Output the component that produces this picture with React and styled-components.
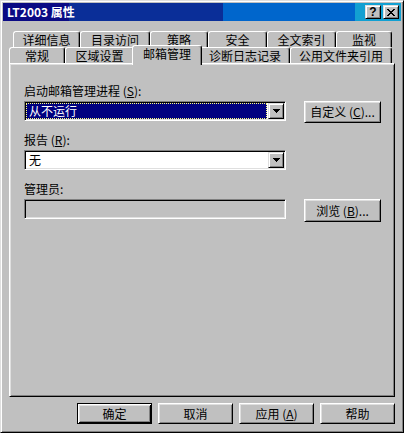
import React from 'react';
import styled, { createGlobalStyle } from 'styled-components';

// classic 3d colours
const FACE = '#c0c0c0';
const LIGHT = '#dfdfdf';
const SHADOW = '#808080';

const GlobalStyle = createGlobalStyle`
  html, body {
    margin: 0;
    padding: 0;
    background: ${FACE};
  }
  body {
    font-family: "Noto Sans CJK SC", "Liberation Sans", sans-serif;
    font-size: 12px;
    color: #000;
  }
  * {
    box-sizing: border-box;
  }
`;

const Window = styled.div`
  width: 404px;
  height: 433px;
  background: ${FACE};
  border: 1px solid;
  border-color: ${LIGHT} #000 #000 ${LIGHT};
  box-shadow: inset 1px 1px #fff, inset -1px -1px ${SHADOW};
  padding: 2px;
  display: flex;
  flex-direction: column;
`;

const TitleBar = styled.div`
  height: 18px;
  display: flex;
  align-items: center;
  padding: 0 2px;
  color: #fff;
  background: linear-gradient(
    to right,
    #0a0a84 0, #0a0a84 66px,
    #0a2e98 66px, #0a2e98 220px,
    #0066cc 220px, #0066cc 352px,
    #12a0d2 352px, #12a0d2 100%
  );
`;

const Caption = styled.div`
  flex: 1;
  padding-left: 2px;
  line-height: 18px;
  font-size: 12px;
  font-weight: 700;
  white-space: nowrap;
`;

const CaptionButtons = styled.div`
  display: flex;
  gap: 2px;
`;

const CaptionButton = styled.div`
  width: 16px;
  height: 14px;
  display: flex;
  align-items: center;
  justify-content: center;
  background: ${FACE};
  border: 1px solid;
  border-color: ${LIGHT} #000 #000 ${LIGHT};
  box-shadow: inset 1px 1px #fff, inset -1px -1px ${SHADOW};
  color: #000;
  font-family: "Liberation Sans", sans-serif;
  font-weight: 700;
  font-size: 12px;
  line-height: 12px;
`;

const Body = styled.div`
  flex: 1;
  padding: 10px 6px 0 6px;
  display: flex;
  flex-direction: column;
`;

const TabRow = styled.div`
  display: flex;
  height: 16px;
  padding-left: ${p => p.$indent || 0}px;
  align-items: flex-start;
`;

const Tab = styled.div`
  position: relative;
  width: ${p => p.$w}px;
  height: ${p => (p.$active ? 20 : 16)}px;
  margin: ${p => (p.$active ? '-2px -2px 0' : '0')};
  z-index: ${p => (p.$active ? 2 : 1)};
  background: ${FACE};
  border: 1px solid;
  border-bottom: none;
  border-color: #fff #000 transparent #fff;
  border-radius: 3px 3px 0 0;
  box-shadow: inset -1px 0 ${SHADOW};
  padding-top: 1px;
  text-align: center;
  line-height: 13px;
  white-space: nowrap;
`;

const Panel = styled.div`
  height: 334px;
  border: 1px solid;
  border-color: #fff #000 #000 #fff;
  box-shadow: inset 1px 1px ${LIGHT}, inset -1px -1px ${SHADOW};
  padding: 20px 0 0 14px;
`;

const Label = styled.div`
  line-height: 14px;
  height: 14px;
  margin-bottom: 3px;
  white-space: nowrap;
`;

const Row = styled.div`
  display: flex;
  align-items: flex-start;
  gap: 18px;
  height: 20px;
  margin-bottom: 12px;
`;

const Sunken = styled.div`
  width: 262px;
  height: 20px;
  display: flex;
  padding: 1px;
  background: ${p => (p.$disabled ? FACE : '#fff')};
  border: 1px solid;
  border-color: ${SHADOW} #fff #fff ${SHADOW};
  box-shadow: inset 1px 1px #000, inset -1px -1px ${LIGHT};
`;

const ComboValue = styled.div`
  flex: 1;
  margin-right: 1px;
  padding-left: 2px;
  line-height: 14px;
  color: ${p => (p.$selected ? '#fff' : '#000')};
  background: ${p => (p.$selected ? '#000080' : 'transparent')};
  border: 1px ${p => (p.$selected ? 'dotted #ffff80' : 'solid transparent')};
  white-space: nowrap;
`;

const DropButton = styled.div`
  width: 16px;
  height: 16px;
  display: flex;
  align-items: center;
  justify-content: center;
  background: ${FACE};
  border: 1px solid;
  border-color: ${LIGHT} #000 #000 ${LIGHT};
  box-shadow: inset 1px 1px #fff, inset -1px -1px ${SHADOW};
`;

const Button = styled.div`
  width: ${p => p.$w || 75}px;
  height: ${p => p.$h || 21}px;
  display: flex;
  align-items: center;
  justify-content: center;
  background: ${FACE};
  border: 1px solid;
  border-color: ${p => (p.$default ? '#000' : `#fff #000 #000 #fff`)};
  box-shadow: ${p =>
    p.$default
      ? `inset 1px 1px #fff, inset -1px -1px #000, inset 2px 2px ${LIGHT}, inset -2px -2px ${SHADOW}`
      : `inset 1px 1px ${LIGHT}, inset -1px -1px ${SHADOW}`};
  line-height: 14px;
  white-space: nowrap;
  flex-shrink: 0;
`;

const Footer = styled.div`
  display: flex;
  justify-content: flex-end;
  gap: 6px;
  margin-top: 6px;
`;

const Arrow = () => (
  <svg width="7" height="4" viewBox="0 0 7 4" shapeRendering="crispEdges">
    <path d="M0 0h7v1H0zM1 1h5v1H1zM2 2h3v1H2zM3 3h1v1H3z" fill="#000" />
  </svg>
);

const CloseGlyph = () => (
  <svg width="8" height="7" viewBox="0 0 8 7" shapeRendering="crispEdges">
    <path
      d="M0 0h2v1H0zM6 0h2v1H6zM1 1h2v1H1zM5 1h2v1H5zM2 2h4v1H2zM3 3h2v1H3zM2 4h4v1H2zM1 5h2v1H1zM5 5h2v1H5zM0 6h2v1H0zM6 6h2v1H6z"
      fill="#000"
    />
  </svg>
);

const backTabs = [
  { label: '详细信息', w: 67 },
  { label: '目录访问', w: 70 },
  { label: '策略', w: 58 },
  { label: '安全', w: 59 },
  { label: '全文索引', w: 69 },
  { label: '监视', w: 56 },
];

const frontTabs = [
  { label: '常规', w: 56 },
  { label: '区域设置', w: 69 },
  { label: '邮箱管理', w: 70, active: true },
  { label: '诊断日志记录', w: 90 },
  { label: '公用文件夹引用', w: 102 },
];

export default function App() {
  return (
    <>
      <GlobalStyle />
      <Window>
        <TitleBar>
          <Caption>LT2003 属性</Caption>
          <CaptionButtons>
            <CaptionButton>?</CaptionButton>
            <CaptionButton><CloseGlyph /></CaptionButton>
          </CaptionButtons>
        </TitleBar>
        <Body>
          <TabRow $indent={4}>
            {backTabs.map(t => (
              <Tab key={t.label} $w={t.w}>{t.label}</Tab>
            ))}
          </TabRow>
          <TabRow>
            {frontTabs.map(t => (
              <Tab key={t.label} $w={t.w} $active={t.active}>{t.label}</Tab>
            ))}
          </TabRow>
          <Panel>
            <Label>启动邮箱管理进程 (<u>S</u>):</Label>
            <Row>
              <Sunken>
                <ComboValue $selected>从不运行</ComboValue>
                <DropButton><Arrow /></DropButton>
              </Sunken>
              <Button $w={77} $h={22}>自定义 (<u>C</u>)...</Button>
            </Row>
            <Label>报告 (<u>R</u>):</Label>
            <Row>
              <Sunken>
                <ComboValue>无</ComboValue>
                <DropButton><Arrow /></DropButton>
              </Sunken>
            </Row>
            <Label>管理员:</Label>
            <Row>
              <Sunken $disabled />
              <Button $w={77} $h={23}>浏览 (<u>B</u>)...</Button>
            </Row>
          </Panel>
          <Footer>
            <Button $default>确定</Button>
            <Button>取消</Button>
            <Button>应用 (<u>A</u>)</Button>
            <Button>帮助</Button>
          </Footer>
        </Body>
      </Window>
    </>
  );
}
